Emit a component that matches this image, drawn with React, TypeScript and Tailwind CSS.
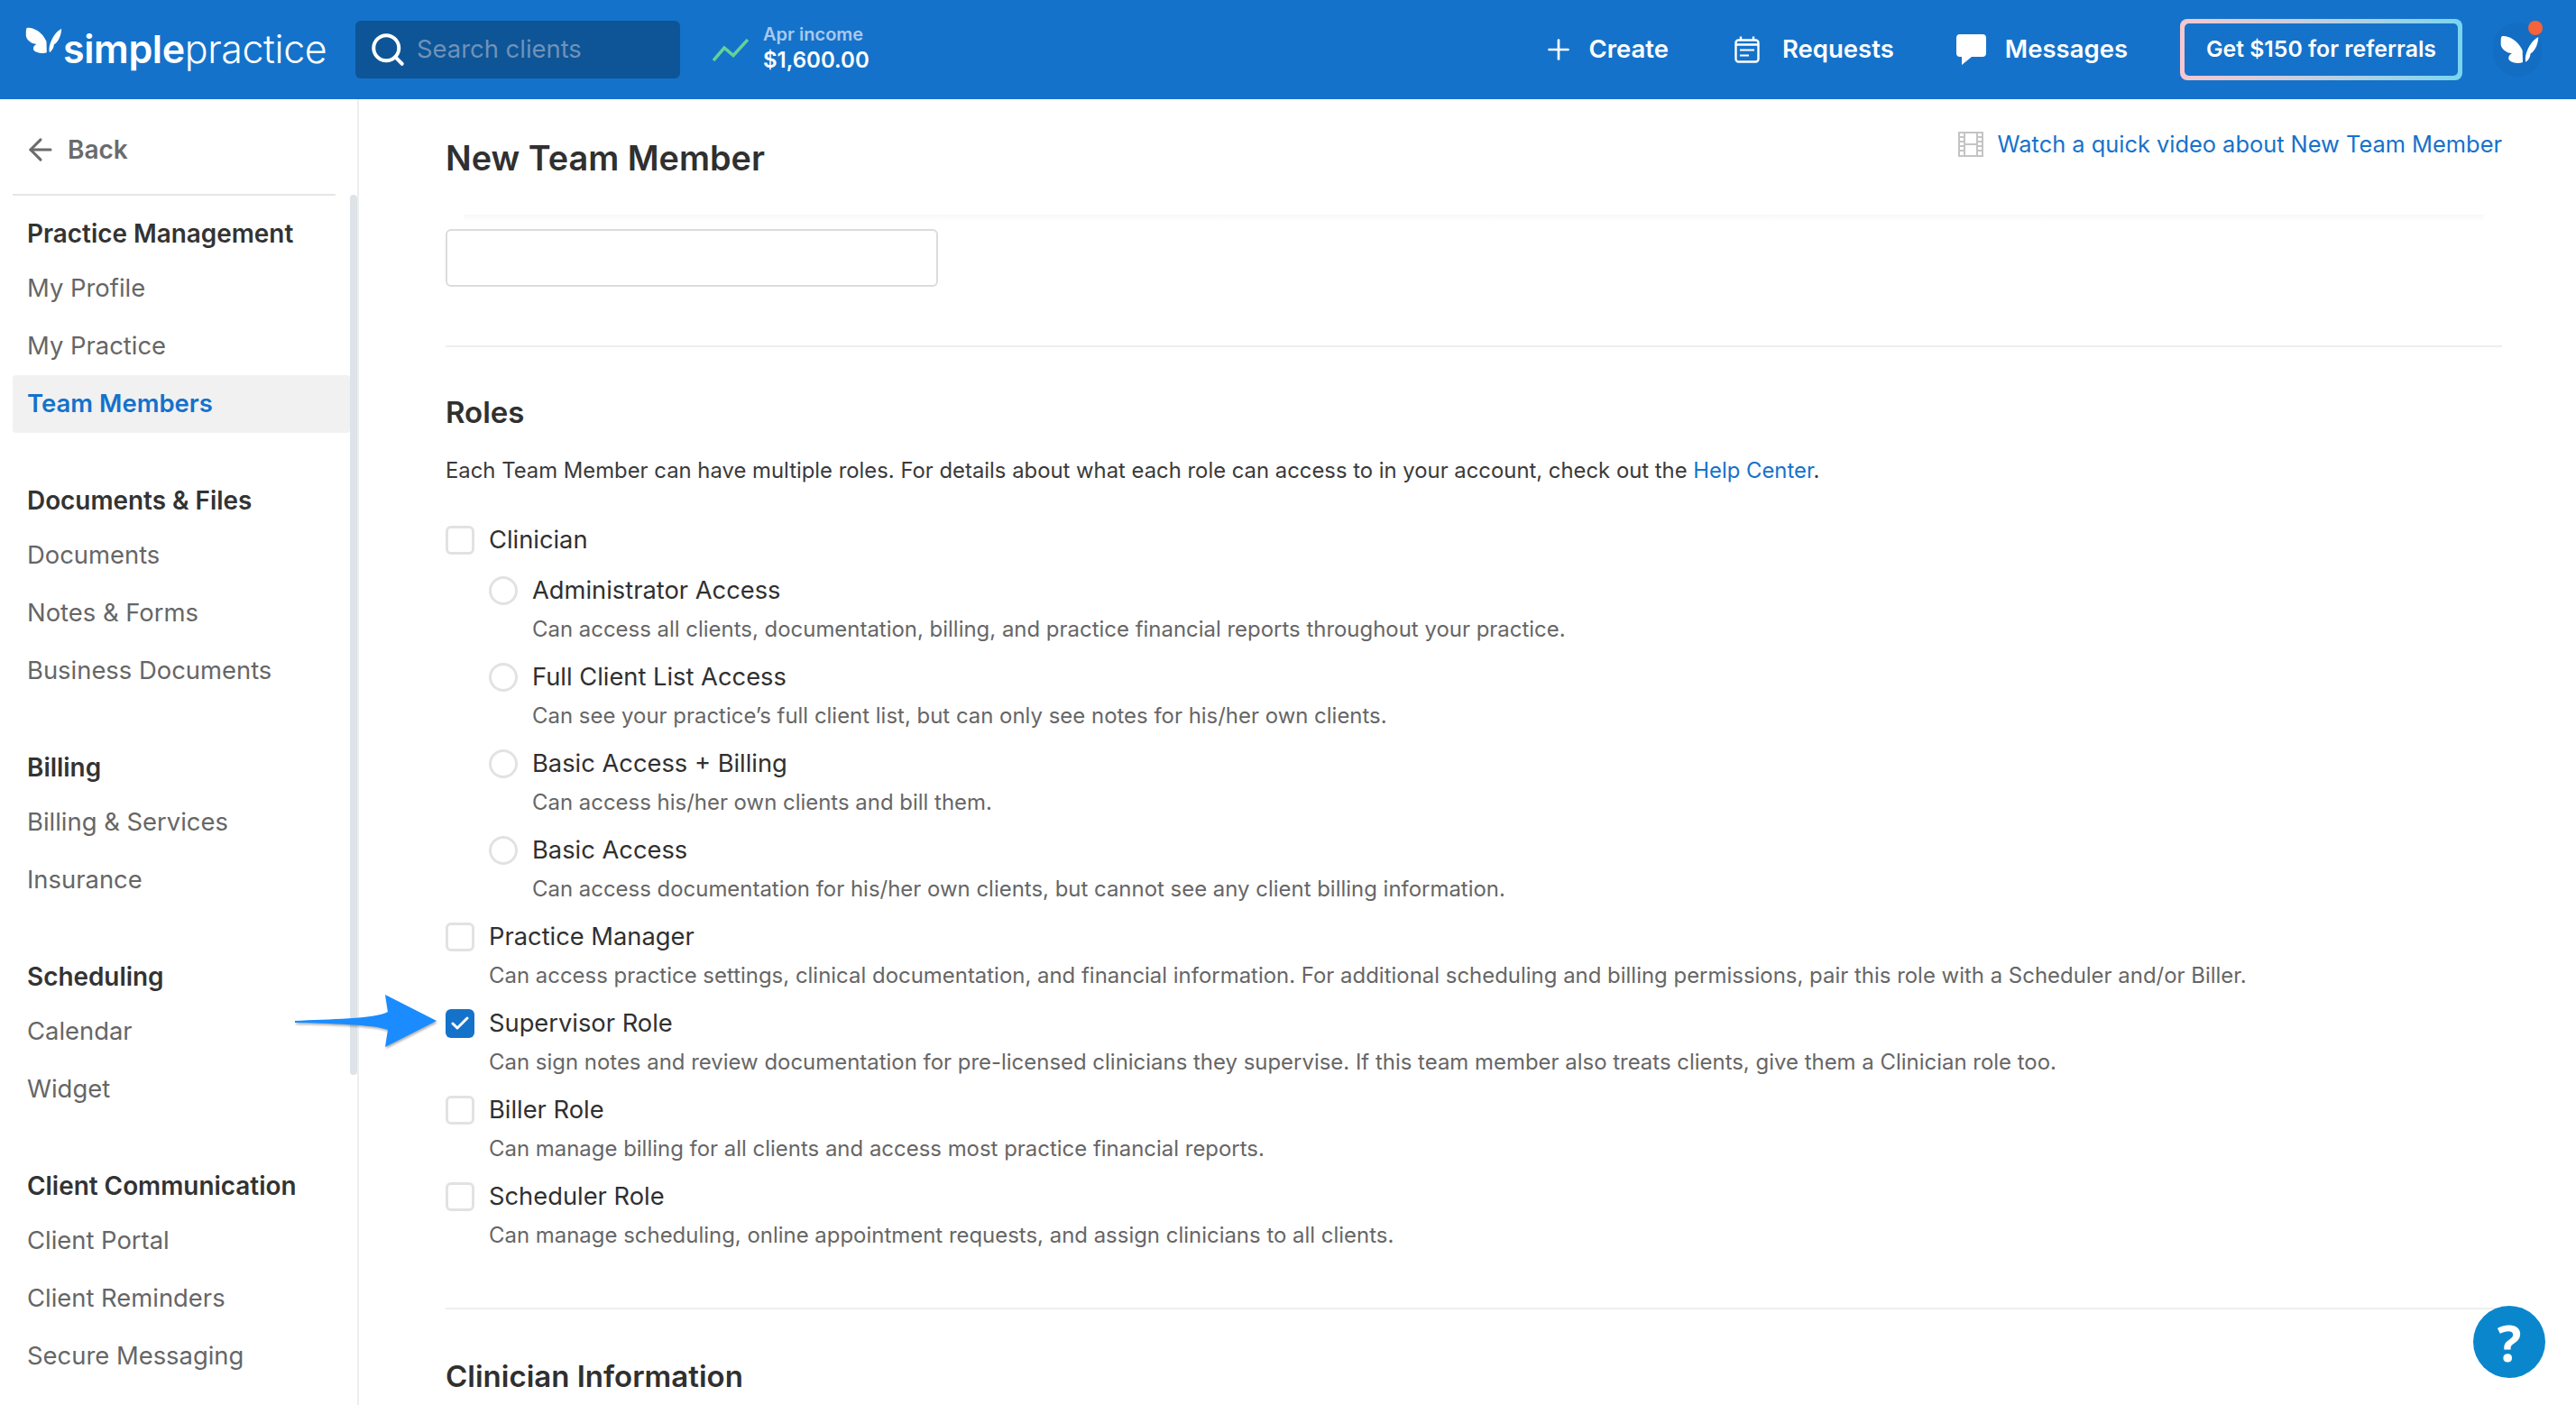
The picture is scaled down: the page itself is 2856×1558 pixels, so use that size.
import { ArrowLeft, Check, Plus, Search } from 'lucide-react';

const nav = [
  { title: 'Practice Management', items: ['My Profile', 'My Practice', 'Team Members'] },
  { title: 'Documents & Files', items: ['Documents', 'Notes & Forms', 'Business Documents'] },
  { title: 'Billing', items: ['Billing & Services', 'Insurance'] },
  { title: 'Scheduling', items: ['Calendar', 'Widget'] },
  { title: 'Client Communication', items: ['Client Portal', 'Client Reminders', 'Secure Messaging'] },
];

const accessLevels = [
  { name: 'Administrator Access', text: 'Can access all clients, documentation, billing, and practice financial reports throughout your practice.' },
  { name: 'Full Client List Access', text: 'Can see your practice’s full client list, but can only see notes for his/her own clients.' },
  { name: 'Basic Access + Billing', text: 'Can access his/her own clients and bill them.' },
  { name: 'Basic Access', text: 'Can access documentation for his/her own clients, but cannot see any client billing information.' },
];

const roles = [
  { name: 'Practice Manager', text: 'Can access practice settings, clinical documentation, and financial information. For additional scheduling and billing permissions, pair this role with a Scheduler and/or Biller.' },
  { name: 'Supervisor Role', checked: true, text: 'Can sign notes and review documentation for pre-licensed clinicians they supervise. If this team member also treats clients, give them a Clinician role too.' },
  { name: 'Biller Role', text: 'Can manage billing for all clients and access most practice financial reports.' },
  { name: 'Scheduler Role', text: 'Can manage scheduling, online appointment requests, and assign clinicians to all clients.' },
];

function Butterfly({ className }: { className?: string }) {
  return (
    <svg viewBox="0 0 125 90" className={className} fill="currentColor">
      <path d="M5 3C22 -1 56 14 70 48L71 85C60 90 34 87 27 76C24 66 31 59 37 57C18 56 0 40 2 25C2 15 2 5 5 3Z" />
      <path d="M120 5C102 15 88 35 81 60C78 72 79 82 81 84C92 76 95 65 95 58C110 50 120 25 120 5Z" />
    </svg>
  );
}

function RequestsIcon() {
  return (
    <svg viewBox="0 0 28 30" className="h-[30px] w-[28px]" fill="none" stroke="white" strokeWidth="2.4">
      <rect x="1.5" y="4.5" width="25" height="24" rx="3" />
      <path d="M7 0.5v4M21 0.5v4M1.5 9.5h25" />
      <path d="M6 15.5h16M6 21.5h10" strokeWidth="2.2" />
    </svg>
  );
}

function MessagesIcon() {
  return (
    <svg viewBox="0 0 33 34" className="h-[34px] w-[33px]" fill="white">
      <path d="M4 0h25a4 4 0 0 1 4 4v17a4 4 0 0 1-4 4H17L6 34v-9H4a4 4 0 0 1-4-4V4a4 4 0 0 1 4-4z" />
    </svg>
  );
}

function FilmIcon() {
  return (
    <svg viewBox="0 0 28 28" className="h-[28px] w-[28px]" fill="none" stroke="#c4c4c4" strokeWidth="2">
      <rect x="1" y="1" width="26" height="26" />
      <path d="M7 1v26M21 1v26M7 14h14M1 6h6M1 11h6M1 16h6M1 21h6M21 6h6M21 11h6M21 16h6M21 21h6" />
    </svg>
  );
}

function CheckBox({ checked }: { checked?: boolean }) {
  if (checked) {
    return (
      <span className="flex h-[32px] w-[32px] shrink-0 items-center justify-center rounded-[6px] bg-[#1572ca]">
        <Check className="h-[24px] w-[24px] text-white" strokeWidth={3} />
      </span>
    );
  }
  return <span className="h-[32px] w-[32px] shrink-0 rounded-[6px] border-[3px] border-[#e2e2e2] bg-white" />;
}

function RoleRow({ name, text, checked, radio }: { name: string; text: string; checked?: boolean; radio?: boolean }) {
  return (
    <div className={radio ? 'h-[96px] pl-[48px]' : 'h-[96px]'}>
      <div className="flex h-[44px] items-center gap-[16px]">
        {radio ? (
          <span className="h-[32px] w-[32px] shrink-0 rounded-full border-[3px] border-[#e2e2e2] bg-white" />
        ) : (
          <CheckBox checked={checked} />
        )}
        <span className="text-[27.3px] text-[#303030]">{name}</span>
      </div>
      <p className="pl-[48px] text-[23.95px] leading-[42px] text-[#666666]">{text}</p>
    </div>
  );
}

function Sidebar() {
  return (
    <aside className="relative w-[398px] shrink-0 overflow-hidden border-r-2 border-[#eeeeee]">
      <div className="flex items-center gap-[11px] pl-[26px] pt-[36px] pb-[29px] text-[28px] font-semibold leading-[40px] text-[#6b6b6b]">
        <ArrowLeft className="h-[38px] w-[38px]" strokeWidth={1.9} />
        <span>Back</span>
      </div>
      <div className="ml-[14px] h-[2px] w-[358px] bg-[#e6e6e6]" />
      <nav className="ml-[14px] w-[374px] pt-[22px]">
        {nav.map((section) => (
          <div key={section.title} className="mb-[55px]">
            <h3 className="mb-[9px] pl-[16px] text-[27.9px] font-semibold leading-[40px] text-[#333333]">{section.title}</h3>
            {section.items.map((item) =>
              item === 'Team Members' ? (
                <div key={item} className="flex h-[64px] items-center rounded-[4px] bg-[#f1f1f1] pl-[16px] text-[27.5px] font-semibold text-[#1572ca]">
                  {item}
                </div>
              ) : (
                <div key={item} className="flex h-[64px] items-center pl-[16px] text-[27.4px] text-[#666666]">
                  {item}
                </div>
              ),
            )}
          </div>
        ))}
      </nav>
      <div className="absolute right-0 top-[106px] h-[976px] w-[8px] rounded-[4px] bg-[#dde3e6]" />
    </aside>
  );
}

export default function App() {
  return (
    <div className="relative flex h-[1558px] w-[2856px] flex-col overflow-hidden bg-white font-['Inter',sans-serif]">
      <header className="flex h-[110px] shrink-0 items-center bg-[#1572ca] text-white">
        <div className="ml-[28px] flex w-[366px] items-center">
          <Butterfly className="mb-[20px] h-[30px] w-[42px]" />
          <span className="pb-[2px] text-[43px] leading-none tracking-[-0.4px]">
            <span className="font-semibold">simple</span>
            <span className="font-light">practice</span>
          </span>
        </div>
        <div className="flex h-[64px] w-[360px] items-center gap-[11px] rounded-[6px] bg-[#0d5596] pl-[15px]">
          <Search className="h-[42px] w-[42px]" strokeWidth={2.3} />
          <span className="text-[27.4px] text-[#6f92ba]">Search clients</span>
        </div>
        <svg viewBox="0 0 40 25" className="ml-[36px] h-[25px] w-[40px]" fill="none" stroke="#63d19a" strokeWidth="3.5">
          <path d="M1 24L13 10L23 18.5L39 1" />
        </svg>
        <div className="ml-[16px] pb-[3px]">
          <div className="text-[20px] font-semibold leading-[26px] text-[#a9c9ee]">Apr income</div>
          <div className="text-[24px] font-semibold leading-[32px]">$1,600.00</div>
        </div>
        <div className="ml-auto flex items-center text-[27.5px] font-semibold">
          <div className="flex items-center gap-[15px]">
            <Plus className="h-[36px] w-[36px]" strokeWidth={1.8} />
            <span>Create</span>
          </div>
          <div className="ml-[73px] flex items-center gap-[25px]">
            <RequestsIcon />
            <span>Requests</span>
          </div>
          <div className="ml-[69px] flex items-center gap-[21px]">
            <MessagesIcon />
            <span>Messages</span>
          </div>
        </div>
        <div className="ml-[58px] h-[68px] w-[313px] rounded-[8px] bg-gradient-to-r from-[#f6c7cf] to-[#78d5f0] p-[5px]">
          <div className="flex h-full items-center justify-center rounded-[5px] bg-[#1572ca] text-[24.8px] font-semibold">Get $150 for referrals</div>
        </div>
        <div className="relative ml-[34px] mr-[38px] h-[60px] w-[54px] rounded-full bg-[#136dc3]">
          <Butterfly className="absolute left-[8px] top-[14px] h-[32px] w-[44px]" />
          <span className="absolute left-[39px] top-[-2px] h-[16px] w-[16px] rounded-full bg-[#f4633a]" />
        </div>
      </header>

      <div className="flex min-h-0 flex-1">
        <Sidebar />
        <main className="min-w-0 flex-1 pl-[96px] pr-[82px]">
          <div className="flex h-[128px] items-start justify-between">
            <h1 className="mt-[40px] text-[37.8px] font-semibold leading-[50px] text-[#303030]">New Team Member</h1>
            <a className="mt-[30px] flex items-center gap-[16px] text-[25.4px] leading-[40px] text-[#1572ca]">
              <FilmIcon />
              Watch a quick video about New Team Member
            </a>
          </div>
          <div className="mx-[20px] h-[8px] bg-gradient-to-b from-[#f8f8f8] to-white" />
          <div className="mt-[8px] h-[64px] w-[546px] rounded-[6px] border-2 border-[#dcdcdc] bg-white" />
          <div className="mt-[65px] h-[2px] bg-[#eeeeee]" />
          <h2 className="mt-[50px] text-[33px] font-semibold leading-[44px] text-[#303030]">Roles</h2>
          <p className="mt-[22px] text-[23.85px] leading-[42px] text-[#3a3a3a]">
            Each Team Member can have multiple roles. For details about what each role can access to in your account, check out the{' '}
            <a className="text-[#1572ca]">Help Center</a>.
          </p>
          <div className="mt-[34px]">
            <div className="flex h-[56px] items-start">
              <div className="flex h-[44px] items-center gap-[16px]">
                <CheckBox />
                <span className="text-[27.3px] text-[#303030]">Clinician</span>
              </div>
            </div>
            {accessLevels.map((level) => (
              <RoleRow key={level.name} name={level.name} text={level.text} radio />
            ))}
            {roles.map((role) => (
              <RoleRow key={role.name} name={role.name} text={role.text} checked={role.checked} />
            ))}
          </div>
          <div className="mt-[49px] h-[2px] bg-[#eeeeee]" />
          <h2 className="mt-[52px] text-[33px] font-semibold leading-[44px] text-[#303030]">Clinician Information</h2>
        </main>
      </div>

      {/* callout arrow pasted over the screenshot */}
      <svg viewBox="0 0 162 62" className="absolute left-[325px] top-[1102px] h-[62px] w-[162px] drop-shadow-[1px_2px_1px_rgba(0,0,0,0.3)]">
        <path d="M2 30 C40 28 90 28 105 20 L102 1 L159 30 L102 59 L105 40 C90 34 40 33 2 32 Z" fill="#1a8cff" />
      </svg>

      <div className="absolute left-[2742px] top-[1448px] flex h-[80px] w-[80px] items-center justify-center rounded-full bg-[#0a87cc] font-['Open_Sans',sans-serif] text-[56px] font-bold text-white">
        ?
      </div>
    </div>
  );
}
